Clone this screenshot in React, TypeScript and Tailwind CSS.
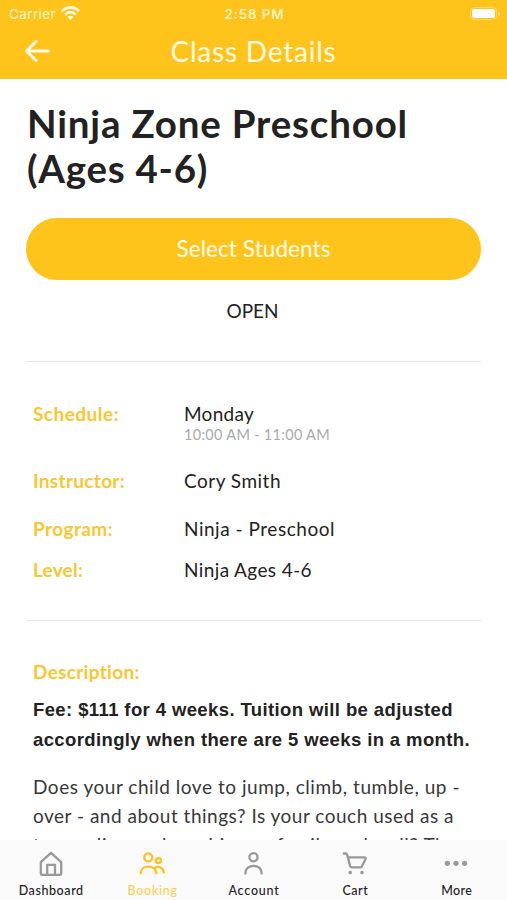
import React from "react";

const tabs = [
  { label: "Dashboard", active: false, width: 65 },
  { label: "Booking", active: true, width: 50 },
  { label: "Account", active: false, width: 51 },
  { label: "Cart", active: false, width: 26 },
  { label: "More", active: false, width: 31 },
];

function TabIcon({ name }: { name: string }) {
  return (
    <svg width="28" height="28" viewBox="0 0 28 28" fill="none" stroke="currentColor" strokeWidth="2.3" strokeLinecap="round" strokeLinejoin="round">
      {name === "Dashboard" && <path d="M3.8 12.2 14 2.8l10.2 9.4v11.4q0 1.2-1.2 1.2H5q-1.2 0-1.2-1.2zM10.2 24.8V14.8h7.8v10" />}
      {name === "Booking" && (
        <>
          <circle cx="10.3" cy="7.4" r="4" />
          <circle cx="20.4" cy="10.6" r="2.5" />
          <path d="M2.7 23.4c0-9.1 14.5-9.1 15.7 0M17 18.1c3.8-2.7 8.3-.3 8.8 4.6" />
        </>
      )}
      {name === "Account" && (
        <>
          <circle cx="14.5" cy="7.3" r="4.1" />
          <path d="M6.4 23.5c0-10.3 16.2-10.3 16.2 0" />
        </>
      )}
      {name === "Cart" && (
        <>
          <path d="M2.8 3.5h2q1 0 1.3 1.1l3.1 11.5q.4 1.3 1.8 1.3h8.2q1.2 0 1.7-1.2l3.7-7.2q.7-1.6-1-1.6H7" />
          <circle cx="9.2" cy="22.6" r="1.8" fill="currentColor" stroke="none" />
          <circle cx="21" cy="22.6" r="1.8" fill="currentColor" stroke="none" />
        </>
      )}
      {name === "More" && (
        <g fill="currentColor" stroke="none">
          <circle cx="5.4" cy="13.3" r="2.6" />
          <circle cx="14" cy="13.3" r="2.6" />
          <circle cx="22.6" cy="13.3" r="2.6" />
        </g>
      )}
    </svg>
  );
}

/** A run of text on one line, set to an exact width. */
function Line({ children, width, className = "" }: { children: string; width: number; className?: string }) {
  const ref = React.useRef<HTMLSpanElement>(null);
  const [spacing, setSpacing] = React.useState(0);
  React.useLayoutEffect(() => {
    const el = ref.current;
    if (el) setSpacing((width - el.getBoundingClientRect().width) / children.length);
  }, [width, children]);
  return (
    <span ref={ref} className={`inline-block whitespace-nowrap ${className}`} style={{ letterSpacing: `${spacing}px` }}>
      {children}
    </span>
  );
}

function Row({ label, value, lw, vw, className }: { label: string; value: string; lw: number; vw: number; className: string }) {
  return (
    <div className={`flex pl-1.5 leading-6 ${className}`}>
      <dt className="w-[151px] font-bold text-[#fcc62f]"><Line width={lw}>{label}</Line></dt>
      <dd><Line width={vw}>{value}</Line></dd>
    </div>
  );
}

export default function App() {
  return (
    <div className="flex h-[900px] w-[507px] flex-col overflow-hidden bg-white font-['Lato',sans-serif] text-[#222]">
      <header className="h-[79px] shrink-0 bg-[#ffc41c] text-white">
        <div className="grid h-7 grid-cols-3 items-center pr-[7px] pl-[9px] font-['Inter',sans-serif] text-[13.5px] text-[#fff6d0]">
          <div className="flex items-center gap-[5px]">
            <Line width={47}>Carrier</Line>
            <svg className="-mt-0.5" width="19" height="15" viewBox="0 0 19 15" fill="none" stroke="#fffbe6" strokeWidth="2.6">
              <path d="M1 5.1Q9.5-2.4 18 5.1M4.1 8.4q5.4-4.7 10.8 0" />
              <path d="m9.5 14-3-3q3-2.5 6 0z" fill="#fffbe6" stroke="none" />
            </svg>
          </div>
          <div className="text-center font-medium"><Line width={60}>2:58 PM</Line></div>
          <div className="-mt-px flex items-center justify-end">
            <div className="h-[13px] w-[27px] rounded-[4px] border border-[#ffd869] p-px"><div className="h-full rounded-[2px] bg-white" /></div>
            <div className="ml-px h-1 w-0.5 rounded-r bg-[#ffd869]" />
          </div>
        </div>
        <div className="-mt-px grid h-12 grid-cols-[65px_1fr_65px] items-center">
          <svg className="ml-6" width="27" height="24" viewBox="0 0 27 24" fill="none" stroke="#fffbe6" strokeWidth="3" strokeLinecap="round" strokeLinejoin="round">
            <path d="M12 2.5 2.5 12l9.5 9.5M3 12h21.5" />
          </svg>
          <h1 className="text-center text-[28px] leading-10 text-[#fffbe6]"><Line width={166}>Class Details</Line></h1>
        </div>
      </header>

      <main className="min-h-0 flex-1 overflow-hidden px-[26px]">
        <h2 className="pt-[22px] pl-px text-[38.5px] leading-[45px] font-bold">
          <Line width={381}>Ninja Zone Preschool</Line>
          <br />
          <Line width={181}>(Ages 4-6)</Line>
        </h2>
        <button className="mt-[27px] flex h-[62px] w-[455px] items-center justify-center rounded-full bg-[#ffc41c] text-[22.5px] text-[#fffdf0]">
          <Line width={154}>Select Students</Line>
        </button>
        <p className="mt-[19px] pr-[2px] text-center text-[19px] leading-6"><Line width={52}>OPEN</Line></p>
        <hr className="mt-[38px] border-[#e8e8e8]" />
        <dl className="pl-px text-[19px]">
          <Row className="mt-10" label="Schedule:" value="Monday" lw={86} vw={70} />
          <p className="-mt-px ml-[157px] text-[14.5px] leading-5 text-[#aaa]"><Line width={146}>10:00 AM - 11:00 AM</Line></p>
          <Row className="mt-6" label="Instructor:" value="Cory Smith" lw={92} vw={97} />
          <Row className="mt-6" label="Program:" value="Ninja - Preschool" lw={80} vw={151} />
          <Row className="mt-[17px]" label="Level:" value="Ninja Ages 4-6" lw={50} vw={128} />
        </dl>
        <hr className="mt-[38px] border-[#e8e8e8]" />
        <section className="pl-[7px] text-[19px]">
          <h3 className="mt-[39px] leading-6 font-bold text-[#fcc62f]"><Line width={107}>Description:</Line></h3>
          <p className="mt-[11px] font-['Liberation_Sans',sans-serif] text-[18.5px] leading-[29.5px] font-bold">
            <Line width={420}>Fee: $111 for 4 weeks. Tuition will be adjusted</Line><br />
            <Line width={437}>accordingly when there are 5 weeks in a month.</Line>
          </p>
          <p className="mt-[18px] leading-[29px] text-[#383838]">
            <Line width={427}>Does your child love to jump, climb, tumble, up -</Line><br />
            <Line width={421}>over - and about things? Is your couch used as a</Line><br />
            <Line width={424}>trampoline and machine as family and wall? The</Line>
          </p>
        </section>
      </main>

      <nav className="grid h-[60px] shrink-0 grid-cols-5 bg-[#fafafa]">
        {tabs.map((tab) => (
          <div key={tab.label} className={`flex flex-col items-center pt-2.5 ${tab.active ? "text-[#ffc020]" : "text-[#999]"}`}>
            <TabIcon name={tab.label} />
            <span className={`mt-[5px] pl-px text-[12.5px] leading-4 font-medium ${tab.active ? "text-[#ffcf55]" : "text-[#222]"}`}>
              <Line width={tab.width}>{tab.label}</Line>
            </span>
          </div>
        ))}
      </nav>
    </div>
  );
}
